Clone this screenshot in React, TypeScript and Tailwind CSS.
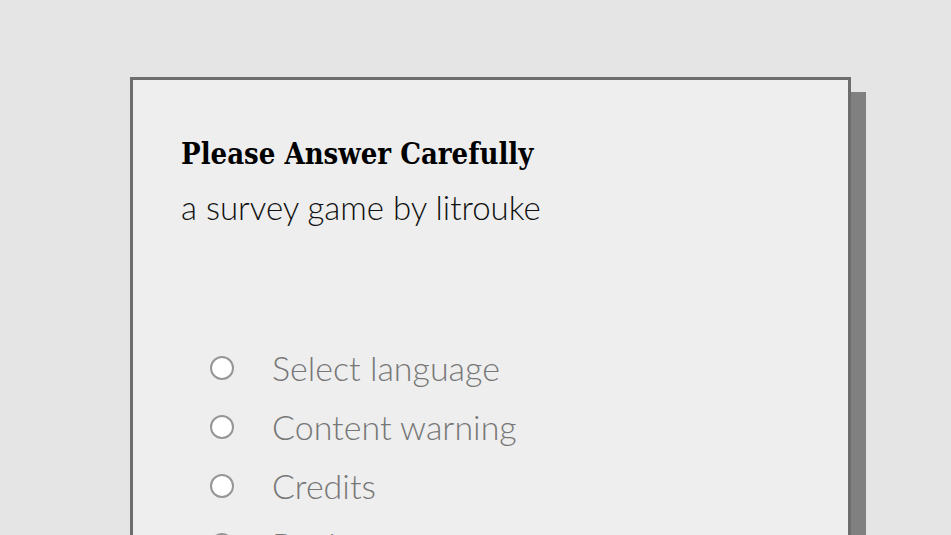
export default function App() {
  const items = ["Select language", "Content warning", "Credits", "Begin"];

  return (
    <div className="min-h-screen bg-[#e5e5e5] pt-[77px] pl-[130px] pb-10">
      <div className="w-[721px] border-[3px] border-[#6d6d6d] bg-[#eeeeee] shadow-[15px_15px_0_#808080] px-[48px] pt-[56px] pb-12">
        <h1 className="text-[29px] leading-[36px] font-bold text-black [font-family:'DejaVu_Serif',serif] [font-stretch:condensed]">
          Please Answer Carefully
        </h1>
        <p className="mt-[17px] text-[33px] leading-[36px] font-light text-[#111] [font-family:Lato,sans-serif]">
          a survey game by litrouke
        </p>
        <ul className="mt-[125px] flex flex-col gap-[23px] pl-[29px]">
          {items.map((item) => (
            <li key={item} className="flex items-center gap-[38px]">
              <span className="w-[24px] h-[24px] rounded-full border-2 border-[#969696] bg-white shrink-0" />
              <span className="text-[34px] leading-[36px] font-light text-[#777] [font-family:Lato,sans-serif]">
                {item}
              </span>
            </li>
          ))}
        </ul>
      </div>
    </div>
  );
}
